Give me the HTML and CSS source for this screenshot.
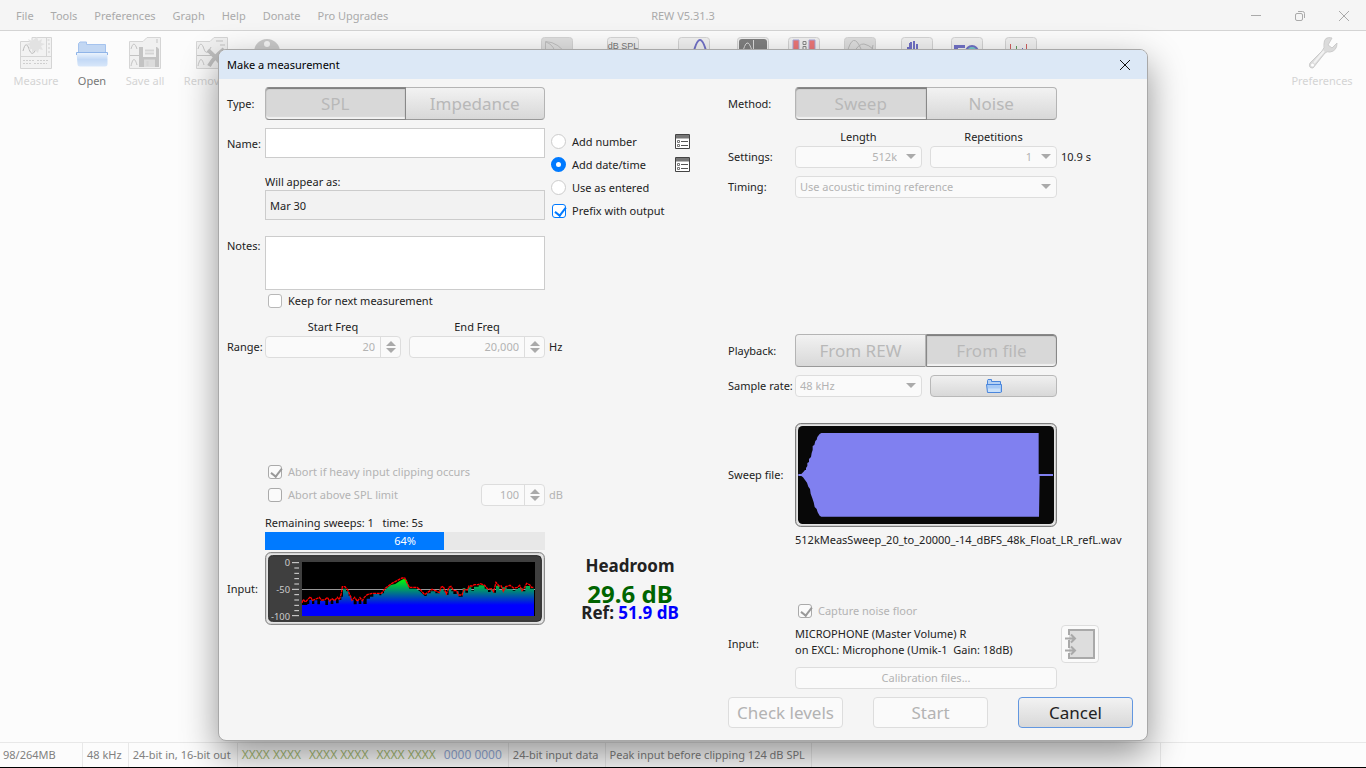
FILE: index.html
```html
<!DOCTYPE html>
<html lang="en">

<head>
    <meta charset="UTF-8">
    <meta name="viewport" content="width=device-width, initial-scale=1.0">
    <title>REW V5.31.3</title>
    <link rel="stylesheet" href="styles.css">
</head>

<body>
    <div class="app">
        <header class="menubar">
            <nav>
                <a href="#">File</a>
                <a href="#">Tools</a>
                <a href="#">Preferences</a>
                <a href="#">Graph</a>
                <a href="#">Help</a>
                <a href="#">Donate</a>
                <a href="#">Pro Upgrades</a>
            </nav>
            <h1>REW V5.31.3</h1>
            <div class="window-buttons">
                <button type="button"><svg width="12" height="12" viewBox="0 0 12 12"><path d="M1 5.500H11" /></svg></button>
                <button type="button"><svg width="12" height="12" viewBox="0 0 12 12"><rect x="1.500" y="3.500" width="7" height="7" rx="1.500" /><path d="M4 1.500H8.500a2 2 0 0 1 2 2V8" /></svg></button>
                <button type="button"><svg width="12" height="12" viewBox="0 0 12 12"><path d="M1 1L11 11M11 1L1 11" /></svg></button>
            </div>
        </header>
        <div class="toolbar">
            <div class="tools tools-left">
                <button type="button" class="tool tool-measure" disabled>
                    <svg width="32" height="32" viewBox="0 0 32 32">
                        <path d="M.5 4.500H12V.5H31.500V31.500H.5Z" fill="#f0f0f0" stroke="#ccc" />
                        <path d="M1 19.500H31M26.500 1V19" stroke="#ccc" fill="none" />
                        <path d="M3 14C5 6 7 6 9 12S14 18 16 11" fill="none" stroke="#aaa" />
                        <path d="M17 0l1.500 4 3.500-2-1 4 4 1-4 2 2 4-4-1-1 4-3-3-3 3v-4l-4 1 2-4-4-2 4-1-2-4 4 2Z" fill="#dcdcdc" />
                        <path d="M3 23.500H15M17 23.500H29M3 26.500H12M14 26.500H27M27.500 3h3M28 7h2M28 11h2M28 15h2" stroke="#c4c4c4" stroke-dasharray="2 1" />
                    </svg>
                    <span>Measure</span>
                </button>
                <button type="button" class="tool tool-open">
                    <svg width="32" height="32" viewBox="0 0 32 32">
                        <defs>
                            <linearGradient id="folder" x1="0" y1="0" x2="0" y2="1">
                                <stop offset="0" stop-color="#eef5fd" />
                                <stop offset=".5" stop-color="#c3d9f6" />
                                <stop offset="1" stop-color="#d8e7fa" />
                            </linearGradient>
                        </defs>
                        <path d="M2.500 16V6.500L4 5H10.500V7.500H29.500V16Z" fill="#c2d7f3" stroke="#a5c3ee" />
                        <path d="M.5 15.500H31.500V27Q31.500 29.500 29 29.500H4Q1.500 29.500 1.500 27Z" fill="url(#folder)" />
                        <path d="M.5 18V15.500H31.500V18" fill="none" stroke="#8fb4e8" />
                    </svg>
                    <span>Open</span>
                </button>
                <button type="button" class="tool tool-save" disabled>
                    <svg width="32" height="32" viewBox="0 0 32 32">
                        <path d="M.5 4.500H14L18 .5H31.500V31.500H.5Z" fill="#eee" stroke="#ccc" />
                        <path d="M1 18.500H14M2 12C4 5 6 6 8 12M2 29C4 20 6 21 8 28M28 2v4M28 22h2M28 27h2" fill="none" stroke="#b5b5b5" />
                        <path d="M10 10H28L30 12V30H10Z" fill="#b5b5b5" />
                        <path d="M14 10H27V20H14Z" fill="#eee" />
                        <path d="M15 22.500H26V30H15Z" fill="#d5d5d5" />
                        <path d="M16 13.500H25M16 16.500H25M18.500 24v5" stroke="#ccc" stroke-width="2" />
                    </svg>
                    <span>Save all</span>
                </button>
                <button type="button" class="tool tool-remove" disabled>
                    <svg width="32" height="32" viewBox="0 0 32 32">
                        <path d="M.5 4.500H14L18 .5H31.500V31.500H.5Z" fill="#eee" stroke="#ccc" />
                        <path d="M1 18.500H18M2 12C4 5 6 6 8 12S13 15 15 10M2 29C4 20 6 21 8 28M20 4h7M24 8h5" fill="none" stroke="#b5b5b5" />
                        <path d="M12 13Q20 20 27 29M28 12Q18 20 13 29" stroke="#b0b0b0" stroke-width="4" fill="none" />
                    </svg>
                    <span>Remove all</span>
                </button>
                <button type="button" class="tool tool-info" disabled>
                    <svg width="26" height="32" viewBox="0 0 26 32">
                        <circle cx="13" cy="15" r="13" fill="#c0c0c0" />
                        <circle cx="13" cy="7" r="3" fill="#f5f5f5" />
                    </svg>
                </button>
            </div>
            <div class="tools tools-middle">
                <button type="button" class="tool tool-ir"><svg width="32" height="32" viewBox="0 0 32 32"><rect class="tile tile-off" x=".5" y=".5" width="31" height="31" rx="3" /><path d="M4.500 20V4.500Q18 5 27 20M5 5Q14 8 15 20" fill="none" stroke="#c0c0c0" /></svg></button>
                <button type="button" class="tool tool-spl"><svg width="32" height="32" viewBox="0 0 32 32"><rect class="tile" x=".5" y=".5" width="31" height="31" rx="3" /><text x="16" y="12" text-anchor="middle" class="tile-text">dB SPL</text></svg></button>
                <button type="button" class="tool tool-gen"><svg width="32" height="32" viewBox="0 0 32 32"><rect class="tile" x=".5" y=".5" width="31" height="31" rx="3" /><path d="M14 22Q18 3 22 3T30 22" fill="none" stroke="#7272c8" stroke-width="2" /></svg></button>
                <button type="button" class="tool tool-levels"><svg width="32" height="32" viewBox="0 0 32 32"><rect class="tile" x=".5" y=".5" width="31" height="31" rx="3" /><rect x="2" y="2" width="28" height="28" rx="3" fill="#808080" /><path d="M5 18Q10-4 15 14M16.500 3V20M19 18q4 5 8-5" fill="none" stroke="#ddd" /></svg></button>
                <button type="button" class="tool tool-meter"><svg width="32" height="32" viewBox="0 0 32 32"><rect class="tile" x=".5" y=".5" width="31" height="31" rx="3" /><path d="M5 3H11V22H5ZM21 3H27V22H21Z" fill="#ee7777" stroke="#a9a9dc" /><path d="M15 4.500h3v3h-3zM15 9.500h3v3h-3z" fill="none" stroke="#888" /></svg></button>
                <button type="button" class="tool tool-scope"><svg width="32" height="32" viewBox="0 0 32 32"><rect class="tile tile-off" x=".5" y=".5" width="31" height="31" rx="3" /><path d="M3 16Q9-7 17 12T29 8M8 18Q15 6 20 7T29 12" fill="none" stroke="#bbb" /></svg></button>
                <button type="button" class="tool tool-rta"><svg width="32" height="32" viewBox="0 0 32 32"><rect class="tile" x=".5" y=".5" width="31" height="31" rx="3" /><path d="M6 13V10H8V6H10V13ZM9 13V5H11V13ZM12 13V4H14V13ZM15 13V7H17V13Z" fill="#7272c8" /></svg></button>
                <button type="button" class="tool tool-eq"><svg width="32" height="32" viewBox="0 0 32 32"><rect class="tile" x=".5" y=".5" width="31" height="31" rx="3" /><path d="M3 8H14V11H7V14H3Z" fill="#7272c8" /><circle cx="21" cy="15" r="6" fill="#7cc" stroke="#7272c8" stroke-width="2" /></svg></button>
                <button type="button" class="tool tool-room"><svg width="32" height="32" viewBox="0 0 32 32"><rect class="tile" x=".5" y=".5" width="31" height="31" rx="3" /><path d="M5.500 7V15M21.500 7V15" stroke="#d06060" /><path d="M11.500 9V15" stroke="#60a060" /><path d="M17.500 11V15" stroke="#7272c8" /></svg></button>
            </div>
            <div class="tools tools-right">
                <button type="button" class="tool tool-prefs" disabled>
                    <svg width="32" height="32" viewBox="0 0 32 32">
                        <path d="M26 1Q18-1 18 7Q19 11 16 14L4 26Q2 31 7 31L19 16Q21 14 24 15Q31 14 31 6L26 11L22 8Z" fill="#d4d4d4" stroke="#c0c0c0" />
                        <path d="M18 14L8 26" stroke="#f0f0f0" stroke-width="2" />
                        <circle cx="6.500" cy="28" r="1.500" fill="#fff" />
                    </svg>
                    <span>Preferences</span>
                </button>
            </div>
        </div>
        <main class="workspace"></main>
        <footer class="statusbar">
            <span class="cell cell-memory">98/264MB</span>
            <span class="cell">48 kHz</span>
            <span class="cell">24-bit in, 16-bit out</span>
            <span class="cell cell-bits">
                <span class="bits">XXXX XXXX</span>
                <span class="bits">XXXX XXXX</span>
                <span class="bits">XXXX XXXX</span>
                <span class="bits bits-zero">0000 0000</span>
            </span>
            <span class="cell">24-bit input data</span>
            <span class="cell">Peak input before clipping 124 dB SPL</span>
            <span class="cell cell-fill"></span>
            <span class="cell cell-end"></span>
        </footer>
    </div>

    <div class="overlay">
        <section class="dialog">
            <div class="dialog-title">
                <h2>Make a measurement</h2>
                <button type="button"><svg width="12" height="12" viewBox="0 0 12 12"><path d="M1 1L11 11M11 1L1 11" /></svg></button>
            </div>
            <form class="dialog-body">
                <div class="col-left">
                    <div class="row">
                        <span class="label">Type:</span>
                        <div class="toggle">
                            <button type="button" class="pressed" disabled>SPL</button>
                            <button type="button" disabled>Impedance</button>
                        </div>
                    </div>
                    <div class="row row-name">
                        <label class="label" for="name">Name:</label>
                        <div class="field">
                            <input type="text" class="text-box" id="name">
                            <label for="preview" class="preview-label">Will appear as:</label>
                            <input type="text" class="text-box text-preview" id="preview" value="Mar 30" readonly>
                        </div>
                        <div class="options">
                            <div class="option">
                                <label><input type="radio" name="naming">Add number</label>
                                <button type="button" class="icon-button"><svg width="15" height="15" viewBox="0 0 15 15"><path d="M.5.5H14.500V14.500H.5Z" fill="#fff" stroke="#444" /><path d="M1 1H14V4.500H1Z" fill="#777" /><path d="M2.500 6.500h2v2h-2zM2.500 10.500h2v2h-2z" fill="none" stroke="#777" /><path d="M6 7.500H13M6 11.500H13" stroke="#555" /></svg></button>
                            </div>
                            <div class="option">
                                <label><input type="radio" name="naming" checked>Add date/time</label>
                                <button type="button" class="icon-button"><svg width="15" height="15" viewBox="0 0 15 15"><path d="M.5.5H14.500V14.500H.5Z" fill="#fff" stroke="#444" /><path d="M1 1H14V4.500H1Z" fill="#777" /><path d="M2.500 6.500h2v2h-2zM2.500 10.500h2v2h-2z" fill="none" stroke="#777" /><path d="M6 7.500H13M6 11.500H13" stroke="#555" /></svg></button>
                            </div>
                            <div class="option">
                                <label><input type="radio" name="naming">Use as entered</label>
                            </div>
                            <div class="option">
                                <label><input type="checkbox" checked>Prefix with output</label>
                            </div>
                        </div>
                    </div>
                    <div class="row row-notes">
                        <label class="label" for="notes">Notes:</label>
                        <div class="field">
                            <textarea class="text-box" id="notes"></textarea>
                            <label class="check"><input type="checkbox">Keep for next measurement</label>
                        </div>
                    </div>
                    <div class="row row-range">
                        <span class="label">Range:</span>
                        <div class="field field-pair">
                            <div class="stack">
                                <label for="start">Start Freq</label>
                                <div class="spinner"><input type="text" id="start" value="20" disabled><span class="arrows"></span></div>
                            </div>
                            <div class="stack">
                                <label for="end">End Freq</label>
                                <div class="spinner"><input type="text" id="end" value="20,000" disabled><span class="arrows"></span></div>
                            </div>
                        </div>
                        <span class="unit">Hz</span>
                    </div>
                    <div class="row row-abort">
                        <label class="check muted"><input type="checkbox" checked disabled>Abort if heavy input clipping occurs</label>
                    </div>
                    <div class="row row-limit">
                        <div class="field field-limit">
                            <label class="check muted" id="limit-label"><input type="checkbox" disabled>Abort above SPL limit</label>
                            <div class="spinner spinner-small"><input type="text" value="100" aria-labelledby="limit-label" disabled><span class="arrows"></span></div>
                        </div>
                        <span class="unit muted">dB</span>
                    </div>
                    <div class="row row-input">
                        <span class="label">Input:</span>
                        <div class="field">
                            <p class="remaining">Remaining sweeps: 1 &nbsp; time: 5s</p>
                            <div class="progress">
                                <div class="progress-bar" style="width: 64%"></div>
                                <span>64%</span>
                            </div>
                            <svg class="meter" viewBox="9 6 840 219" preserveAspectRatio="none">
                                <defs>
                                    <linearGradient id="spectrum" gradientUnits="userSpaceOnUse" x1="0" y1="87" x2="0" y2="165">
                                        <stop offset="0" stop-color="#00ff00" />
                                        <stop offset="1" stop-color="#0000ff" />
                                    </linearGradient>
                                </defs>
                                <rect x="11" y="8" width="836" height="215" rx="15" fill="#e4e4e4" stroke="#777" stroke-width="3" />
                                <rect x="20" y="17" width="818" height="197" rx="12" fill="#3f3f3f" stroke="#222" stroke-width="3" />
                                <rect x="120" y="36" width="699" height="162" fill="#000" />
                                <path d="M120 118.500H819" stroke="#999" stroke-width="3" />
                                <path d="M120 198V165H136V162H142V150H150V162H157V151H166V163H174V152H190V165H198V151H206V162H214V150H222V160H230V150H238V140H243V116H252V124H260V138H268V150H275V163H284V151H290V162H298V150H304V162H314V146H324V140H334V132H352V136H358V130H366V124L374 115L386 105L400 102L412 94L426 86L434 90L442 116H462L475 125L488 138H494V130H506V124H520V130H532V136V118H545V124H552V134H560V116H568V124H574V132H584V124H590V140H602V114H610V128H618V112H628V122H636V110H650V106H668V116H678V126H686V118H694V128H702V107H712V120H720V128V112H734V118H752V122H760V118H768V124V114H782V124H790V108H804V116H816V198Z" fill="url(#spectrum)" />
                                <path d="M120 158L124 148L130 156L138 148L145 140L151 151L162 147L172 142L178 150H188L196 142L203 153L210 146L218 152L226 142L232 149L238 130L241 110H249L258 121L264 136L270 151L278 142L286 154L294 143L301 152L307 142L316 134L330 130H358L370 115L390 100L412 88L420 84H428L442 112H465L475 119L488 134L496 128L510 118L520 122L532 128L537 112L544 109L553 132L561 112L567 109L575 122H584L590 135H600L606 118L616 120L621 108H630L637 104H648L655 101L668 106L678 118L688 116L695 125L702 97L711 108H718L724 124L731 110L744 106L755 114L766 112L773 106L780 122L788 112L794 100L803 104L808 112H816" fill="none" stroke="#f00" stroke-width="4" stroke-dasharray="9 2" />
                                <path d="M90 38H111M90 118H111M90 197H111M97 54H111M97 70H111M97 86H111M97 102H111M97 134H111M97 150H111M97 166H111M97 182H111" stroke="#ddd" stroke-width="3" />
                                <g class="meter-scale">
                                    <text x="84" y="49">0</text>
                                    <text x="84" y="130">-50</text>
                                    <text x="84" y="209">-100</text>
                                </g>
                            </svg>
                        </div>
                        <div class="headroom">
                            <p>Headroom</p>
                            <p class="headroom-value">29.6 dB</p>
                            <p>Ref: <span>51.9 dB</span></p>
                        </div>
                    </div>
                </div>

                <div class="col-right">
                    <div class="row">
                        <span class="label">Method:</span>
                        <div class="toggle">
                            <button type="button" class="pressed" disabled>Sweep</button>
                            <button type="button" disabled>Noise</button>
                        </div>
                    </div>
                    <div class="row row-settings">
                        <span class="label">Settings:</span>
                        <div class="field field-pair">
                            <div class="stack">
                                <label for="length">Length</label>
                                <div class="select select-right"><select id="length" disabled><option>512k</option></select></div>
                            </div>
                            <div class="stack">
                                <label for="reps">Repetitions</label>
                                <div class="select select-right"><select id="reps" disabled><option>1</option></select></div>
                            </div>
                        </div>
                        <span class="unit">10.9 s</span>
                    </div>
                    <div class="row row-timing">
                        <label class="label" for="timing">Timing:</label>
                        <div class="field select"><select id="timing" disabled><option>Use acoustic timing reference</option></select></div>
                    </div>
                    <div class="row row-playback">
                        <span class="label">Playback:</span>
                        <div class="toggle">
                            <button type="button" disabled>From REW</button>
                            <button type="button" class="pressed" disabled>From file</button>
                        </div>
                    </div>
                    <div class="row row-rate">
                        <label class="label" for="rate">Sample rate:</label>
                        <div class="field field-pair">
                            <div class="select"><select id="rate" disabled><option>48 kHz</option></select></div>
                            <button type="button" class="browse"><svg width="16" height="14" viewBox="0 0 16 14"><path d="M1.500 7V1.500L2 .5H5.500V2.500H14.500V7" fill="#b5d1f3" stroke="#4a86dc" /><path d="M.5 5.500H15.500V13L14.500 13.500H1.500Z" fill="#a7caf5" stroke="#4a86dc" /><path d="M2 9.500H14V13H2Z" fill="#c8e0fa" /></svg></button>
                        </div>
                    </div>
                    <div class="row row-sweep">
                        <span class="label">Sweep file:</span>
                        <svg class="sweep" viewBox="225 294 786 312" preserveAspectRatio="none">
                            <rect x="227" y="296" width="782" height="308" rx="15" fill="#e4e4e4" stroke="#666" stroke-width="3" />
                            <rect x="234" y="303" width="768" height="294" rx="14" fill="#080808" />
                            <path d="M235 447H244L250 441L255 435H258V429L262 423V414L267 411V402L273 396L275 384L278 375V363L283 360L286 348L290 344L292 336L299 327L304 324H956V447H999V453H959L957 575H304L299 572L293 562L290 552L284 546L281 532L277 520L272 506L270 492L265 485L261 473L255 465L249 457L244 453H235Z" fill="#8080f0" />
                        </svg>
                    </div>
                    <p class="file-name">512kMeasSweep_20_to_20000_-14_dBFS_48k_Float_LR_refL.wav</p>
                    <label class="check check-floor muted"><input type="checkbox" checked disabled>Capture noise floor</label>
                    <div class="row row-device">
                        <span class="label">Input:</span>
                        <p class="field device">MICROPHONE (Master Volume) R<br>on EXCL: Microphone (Umik-1 &nbsp;Gain: 18dB)</p>
                        <button type="button" class="device-button" disabled><svg width="32" height="32" viewBox="0 0 32 32"><path d="M5 7V2H30V30H5V25M5 12V20" fill="#ddd" stroke="#a9a9a9" stroke-width="2" /><path d="M1 10.500H10M1 22.500H10M7 6.500L11 10.500L7 14.500M7 18.500L11 22.500L7 26.500" fill="none" stroke="#a9a9a9" stroke-width="2" /></svg></button>
                    </div>
                    <button type="button" class="calibration" disabled>Calibration files...</button>
                    <div class="actions">
                        <button type="button" disabled>Check levels</button>
                        <button type="button" disabled>Start</button>
                        <button type="button" class="cancel">Cancel</button>
                    </div>
                </div>
            </form>
        </section>
    </div>
</body>

</html>
```
FILE: styles.css
```css
* {
    box-sizing: border-box;
}

body,
h1,
h2,
p {
    margin: 0;
}

body,
button,
input,
select,
textarea {
    font-family: 'Noto Sans', 'Open Sans', sans-serif;
    font-size: 11px;
    line-height: 16px;
    color: #222;
}

button {
    padding: 0;
    border: 0;
    background: none;
}

svg {
    display: block;
}

/* main window */
.app {
    display: flex;
    flex-direction: column;
    height: 100vh;
    background-color: #fcfcfc;
    border-bottom: 1px solid #000;
}

.menubar {
    display: grid;
    grid-template-columns: 1fr auto 1fr;
    align-items: center;
    height: 31px;
    padding: 2px 16px 0;
    background-color: #f5f5f5;
    border-bottom: 1px solid #d4d4d4;
}

.menubar nav {
    display: flex;
    gap: 17px;
}

.menubar a,
.menubar h1 {
    font-size: 11px;
    font-weight: 400;
    color: #aaa;
    text-decoration: none;
}

.window-buttons {
    display: flex;
    justify-content: flex-end;
    gap: 32px;
}

.window-buttons svg {
    fill: none;
    stroke: #aaa;
}

.toolbar {
    display: flex;
    justify-content: space-between;
    padding: 6px 8px;
}

.tools {
    display: flex;
}

.tools-left {
    padding-right: 12px;
}

.tool {
    display: flex;
    flex-direction: column;
    align-items: center;
    gap: 4px;
    color: #777;
}

.tool:disabled {
    color: #d4d4d4;
}

.tool:disabled svg {
    opacity: 0.8;
}

.tool span {
    white-space: nowrap;
}

.tool-measure,
.tool-open {
    width: 56px;
}

.tool-save {
    width: 50px;
}

.tool-remove {
    width: 84px;
}

.tool-info {
    width: 26px;
}

.tool-ir,
.tool-scope,
.tool-room {
    width: 60px;
}

.tool-spl,
.tool-gen {
    width: 71px;
}

.tool-levels,
.tool-eq {
    width: 48px;
}

.tool-meter,
.tool-rta {
    width: 53px;
}

.tool-prefs {
    width: 72px;
}

.tile {
    fill: #f2f2f2;
    stroke: #d4d4d4;
}

.tile-off {
    fill: #e0e0e0;
}

.tile-text {
    font-family: 'Liberation Sans', sans-serif;
    font-size: 9px;
    fill: #777;
}

.workspace {
    flex: 1;
}

.statusbar {
    display: flex;
    height: 25px;
    border-top: 1px solid #e8e8e8;
    color: #808080;
}

.cell {
    display: flex;
    align-items: center;
    padding: 0 6px 0 4px;
    border-right: 1px solid #e8e8e8;
    white-space: nowrap;
}

.cell-memory {
    width: 83px;
    padding-left: 3px;
}

.cell-bits {
    gap: 8px;
}

.bits {
    font-size: 12px;
    color: #a8bd77;
}

.bits-zero {
    color: #94abd9;
}

.cell-fill {
    flex: 1;
}

.cell-end {
    width: 15%;
    border-right: 0;
}

/* dialog */
.overlay {
    position: absolute;
    inset: 0;
    display: flex;
    justify-content: center;
    align-items: flex-start;
    padding-top: 49px;
}

.dialog {
    width: 68%;
    min-width: 930px;
    background-color: #f5f5f5;
    border: 1px solid #a8a8a8;
    border-radius: 8px;
    box-shadow: 0 14px 36px rgba(0, 0, 0, 0.42);
    overflow: hidden;
}

.dialog-title {
    display: flex;
    justify-content: space-between;
    align-items: center;
    height: 29px;
    padding: 0 16px 0 8px;
    background-color: #dce8f6;
}

.dialog-title h2 {
    font-size: 11px;
    font-weight: 400;
    color: #000;
}

.dialog-title svg {
    fill: none;
    stroke: #111;
}

.dialog-body {
    display: grid;
    grid-template-columns: 501px 1fr;
    padding: 8px 14px 12px 8px;
}

.row {
    display: flex;
}

.label {
    flex: none;
    width: 38px;
    white-space: nowrap;
}

.field,
.toggle {
    flex: none;
    width: 280px;
}

.col-right .label {
    width: 67px;
}

.col-right .field,
.col-right .toggle {
    width: 262px;
}

.muted {
    color: #b3b3b3;
}

.unit {
    padding-left: 4px;
}

.toggle {
    display: flex;
    height: 33px;
}

.row:has(.toggle) {
    align-items: center;
}

.toggle button {
    flex: 1;
    font-size: 17px;
    line-height: 24px;
    color: #b8b8b8;
    border: 1px solid #b4b4b4;
    border-bottom-color: #999;
    border-left: 0;
    background: linear-gradient(#f2f2f2, #d8d8d8);
}

.toggle button:first-child {
    border-left: 1px solid #b4b4b4;
    border-radius: 4px 0 0 4px;
}

.toggle button:last-child {
    border-radius: 0 4px 4px 0;
}

.toggle .pressed {
    background: #d8d8d8;
    border: 1px solid #888;
    box-shadow: inset 0 1px 1px #777, inset 0 -2px 1px #f2f2f2;
}

.text-box {
    display: block;
    width: 100%;
    height: 30px;
    padding: 0 4px;
    border: 1px solid #ccc;
    background-color: #fff;
    resize: none;
}

.text-preview {
    background-color: #f2f2f2;
}

.row-name {
    margin-top: 8px;
}

.row-name .label {
    line-height: 32px;
}

.preview-label {
    display: block;
    margin-top: 16px;
}

.options {
    width: 145px;
    padding: 2px 0 0 6px;
}

.option {
    display: flex;
    justify-content: space-between;
    align-items: center;
    height: 23px;
}

.option label,
.check {
    display: flex;
    align-items: center;
    gap: 6px;
    white-space: nowrap;
}

input[type="radio"],
input[type="checkbox"] {
    appearance: none;
    flex: none;
    width: 14px;
    height: 14px;
    margin: 0;
    border: 1px solid #b8b8b8;
    border-radius: 3px;
    background-color: #fff;
}

input[type="radio"] {
    width: 15px;
    height: 15px;
    border-color: #ccc;
    border-radius: 50%;
}

.option input[type="checkbox"] {
    margin-left: 1px;
    border-color: #007aff;
}

input[type="radio"]:checked {
    border: 5px solid #007aff;
}

input[type="checkbox"]:checked::after {
    content: "";
    display: block;
    width: 5px;
    height: 9px;
    margin-left: 4px;
    border: solid #007aff;
    border-width: 0 2px 2px 0;
    transform: rotate(38deg);
}

input[type="checkbox"]:disabled {
    background-color: #fafafa;
    border-color: #aaa;
}

input[type="checkbox"]:disabled::after {
    border-color: #999;
}

.row-notes {
    margin-top: 14px;
}

.row-notes .label {
    padding-top: 2px;
}

.row-notes .text-box {
    height: 54px;
}

.check {
    height: 21px;
    padding-left: 3px;
}

.row-range,
.row-settings {
    align-items: flex-end;
}

.row-range {
    margin-top: 8px;
}

.row-range .label,
.row-range .unit,
.row-settings .label,
.row-settings .unit {
    line-height: 22px;
}

.field-pair {
    display: grid;
    grid-template-columns: repeat(2, minmax(0, 1fr));
    gap: 8px;
}

.stack {
    text-align: center;
}

.stack label {
    display: block;
    padding-bottom: 2px;
    line-height: 15px;
}

.spinner {
    display: flex;
    height: 22px;
    border: 1px solid #ddd;
    border-radius: 4px;
    background-color: #fafafa;
}

.spinner input {
    flex: 1;
    min-width: 0;
    padding: 0 5px;
    border: 0;
    border-right: 1px solid #ddd;
    background: none;
    color: #b3b3b3;
    text-align: right;
}

.arrows {
    display: flex;
    flex-direction: column;
    justify-content: center;
    align-items: center;
    gap: 2px;
    width: 19px;
}

.arrows::before,
.arrows::after {
    content: "";
    border: 5px solid transparent;
    border-top: 0;
    border-bottom-color: #aaa;
}

.arrows::after {
    border: 5px solid transparent;
    border-bottom: 0;
    border-top-color: #aaa;
}

.row-abort {
    margin-top: 103px;
    padding-left: 38px;
}

.row-limit {
    align-items: center;
    margin-top: 2px;
    padding-left: 38px;
}

.field-limit {
    display: flex;
    justify-content: space-between;
    align-items: center;
}

.spinner-small {
    width: 64px;
}

.row-input {
    margin-top: 9px;
}

.row-input .label {
    padding-top: 66px;
}

.remaining {
    padding-bottom: 2px;
    line-height: 15px;
}

.progress {
    display: grid;
    height: 18px;
    background-color: #e8e8e8;
    color: #fff;
    line-height: 18px;
    text-align: center;
}

.progress > * {
    grid-area: 1 / 1;
}

.progress-bar {
    background-color: #007aff;
}

.meter {
    width: 100%;
    height: 73px;
    margin-top: 2px;
}

.meter-scale {
    font-size: 28px;
    fill: #ccc;
    text-anchor: end;
}

.headroom {
    width: 170px;
    padding-top: 42px;
    font-size: 17px;
    font-weight: 700;
    line-height: 18px;
    text-align: center;
}

.headroom-value {
    padding-top: 9px;
    font-size: 24px;
    line-height: 20px;
    color: #006400;
}

.headroom span {
    color: #0000ff;
}

/* right column */
.row-settings {
    margin-top: 9px;
}

.select {
    position: relative;
}

.select select {
    display: block;
    width: 100%;
    height: 22px;
    padding: 0 24px 0 4px;
    appearance: none;
    border: 1px solid #ddd;
    border-radius: 4px;
    background-color: #fafafa;
    color: #b3b3b3;
    opacity: 1;
}

.select-right select {
    text-align-last: right;
}

.select::after {
    content: "";
    position: absolute;
    top: 8px;
    right: 6px;
    border: 5px solid transparent;
    border-bottom: 0;
    border-top-color: #aaa;
}

.row-timing {
    align-items: center;
    margin-top: 8px;
}

.row-playback {
    margin-top: 136px;
}

.row-rate {
    align-items: center;
    margin-top: 8px;
}

.browse {
    display: flex;
    justify-content: center;
    align-items: center;
    border: 1px solid #b8b8b8;
    border-radius: 4px;
    background: linear-gradient(#f0f0f0, #d8d8d8);
}

.row-sweep {
    align-items: center;
    margin-top: 26px;
}

.sweep {
    width: 262px;
    height: 104px;
}

.file-name {
    margin-top: 5px;
    padding-left: 67px;
    white-space: nowrap;
}

.check-floor {
    margin: 52px 0 4px 67px;
}

.row-device {
    align-items: center;
}

.device {
    padding-bottom: 4px;
    white-space: nowrap;
}

.device-button {
    display: flex;
    justify-content: center;
    align-items: center;
    width: 38px;
    height: 38px;
    margin-left: 4px;
    border: 1px solid #ddd;
    border-radius: 4px;
    background-color: #fafafa;
}

.calibration {
    display: block;
    width: 262px;
    height: 22px;
    margin: 4px 0 8px 67px;
    border: 1px solid #ddd;
    border-radius: 4px;
    background-color: #fafafa;
    color: #b3b3b3;
}

.actions {
    display: flex;
    justify-content: space-between;
}

.actions button {
    width: 115px;
    height: 31px;
    border: 1px solid #ddd;
    border-radius: 4px;
    background-color: #fafafa;
    font-size: 17px;
    line-height: 24px;
    color: #b3b3b3;
}

.actions .cancel {
    border-color: #6297e0;
    background: linear-gradient(#f2f2f2, #d8d8d8);
    color: #222;
}
```
